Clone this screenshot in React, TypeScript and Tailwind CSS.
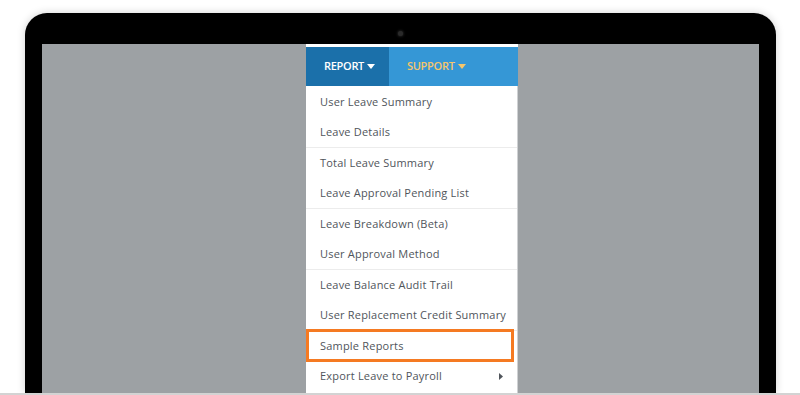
import React from 'react';

const Caret: React.FC<{ color: string }> = ({ color }) => (
  <svg width="8" height="5" viewBox="0 0 8 5" className="ml-[3px]">
    <polygon points="0,0 8,0 4,5" fill={color} />
  </svg>
);

const groups: string[][] = [
  ['User Leave Summary', 'Leave Details'],
  ['Total Leave Summary', 'Leave Approval Pending List'],
  ['Leave Breakdown (Beta)', 'User Approval Method'],
  ['Leave Balance Audit Trail', 'User Replacement Credit Summary'],
];

const Item: React.FC<{ label: string; children?: React.ReactNode }> = ({ label, children }) => (
  <div className="relative h-[30px] flex items-center pl-[14px] pr-[14px] text-[11px] tracking-[0.2px] whitespace-nowrap text-[#50555b]">
    <span className="flex-1">{label}</span>
    {children}
  </div>
);

const ReportMenu: React.FC = () => (
  <div className="w-[212px] flex flex-col bg-white pt-[3px]">
    {/* top nav */}
    <div className="flex h-[39px] text-[11px] font-semibold tracking-[-0.3px]">
      <div className="w-[83px] bg-[#1b70aa] text-white flex items-center pl-[18px]">
        REPORT
        <Caret color="#ffffff" />
      </div>
      <div className="flex-1 bg-[#3597d6] text-[#f6c66c] flex items-center pl-[18px]">
        SUPPORT
        <Caret color="#f6c66c" />
      </div>
    </div>

    {/* dropdown */}
    <div className="flex-1 flex flex-col pt-[1px] border-r border-[#cfd1d3]">
      {groups.map((g, i) => (
        <div key={i} className="border-b border-[#ececec]">
          {g.map((label) => (
            <Item key={label} label={label} />
          ))}
        </div>
      ))}
      <div className="relative">
        <Item label="Sample Reports" />
        <div className="absolute left-0 right-[3px] -top-[2px] -bottom-[1px] border-[3px] border-[#f57a22]" />
      </div>
      <Item label="Export Leave to Payroll">
        <svg width="4" height="7" viewBox="0 0 4 7">
          <polygon points="0,0 4,3.5 0,7" fill="#50555b" />
        </svg>
      </Item>
    </div>
  </div>
);

export default function App() {
  return (
    <div
      className="w-[800px] h-[395px] bg-white flex flex-col overflow-hidden"
      style={{ fontFamily: '"Open Sans", "Liberation Sans", sans-serif' }}
    >
      <div className="flex-1 min-h-0 pt-[13px] pl-[25px]">
        <div className="w-[751px] h-full bg-black rounded-t-[22px] px-[17px] flex flex-col shadow-[0_0_8px_rgba(0,0,0,0.18)]">
          {/* camera */}
          <div className="h-[31px] flex justify-center pt-[18px]">
            <div className="w-[5px] h-[5px] rounded-full bg-[#2a2a2a] shadow-[0_0_3px_rgba(80,80,80,0.8)]" />
          </div>
          {/* screen */}
          <div className="flex-1 min-h-0 bg-[#9da1a4] flex pl-[264px]">
            <ReportMenu />
          </div>
        </div>
      </div>
      <div className="h-[2px] bg-[#d3d3d3]" />
    </div>
  );
}
